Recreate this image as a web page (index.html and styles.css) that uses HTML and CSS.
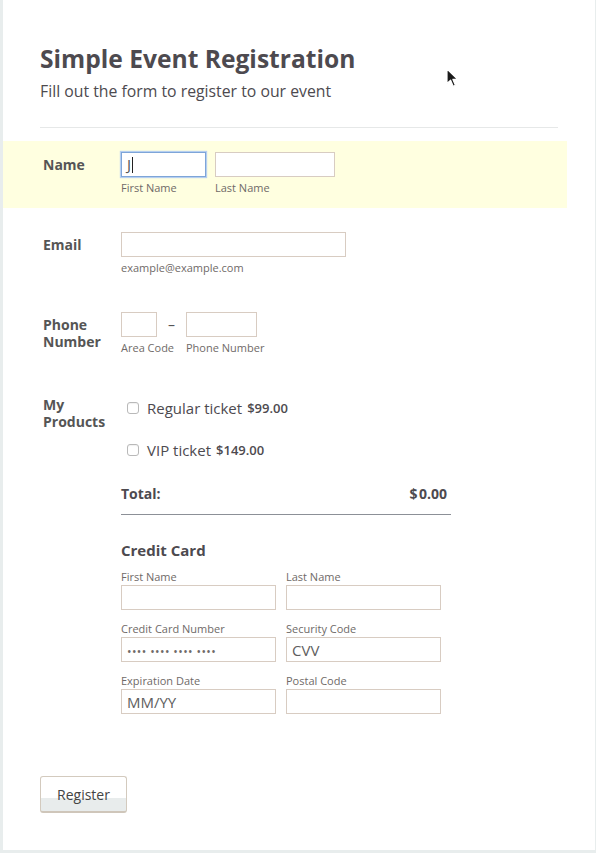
FILE: index.html
```html
<!DOCTYPE html>
<html lang="en">
<head>
<meta charset="utf-8">
<title>Simple Event Registration</title>
<link rel="stylesheet" href="styles.css">
</head>
<body>
<div class="card">
  <header class="head">
    <h1 class="title">Simple Event Registration</h1>
    <p class="subtitle">Fill out the form to register to our event</p>
  </header>

  <ul class="form">
    <li class="row active">
      <div class="label">Name</div>
      <div class="field">
        <div class="inline">
          <div class="sub">
            <span class="input w-first focused">J<span class="caret"></span></span>
            <span class="sublabel">First Name</span>
          </div>
          <div class="sub">
            <input class="input w-last" type="text">
            <span class="sublabel">Last Name</span>
          </div>
        </div>
      </div>
    </li>

    <li class="row">
      <div class="label">Email</div>
      <div class="field">
        <div class="sub">
          <input class="input w-email" type="text">
          <span class="sublabel">example@example.com</span>
        </div>
      </div>
    </li>

    <li class="row">
      <div class="label">Phone<br>Number</div>
      <div class="field">
        <div class="inline phone">
          <div class="sub w-area">
            <input class="input w-area" type="text">
            <span class="sublabel">Area Code</span>
          </div>
          <span class="dash">–</span>
          <div class="sub w-phone">
            <input class="input w-phone" type="text">
            <span class="sublabel">Phone Number</span>
          </div>
        </div>
      </div>
    </li>

    <li class="row">
      <div class="label">My<br>Products</div>
      <div class="field">
        <div class="products">
          <label class="product"><input class="check" type="checkbox"><span class="pname">Regular ticket</span><span class="price">$99.00</span></label>
          <label class="product"><input class="check" type="checkbox"><span class="pname">VIP ticket</span><span class="price">$149.00</span></label>
        </div>
        <div class="total">
          <span class="total-label">Total:</span>
          <span class="total-value">$&#8202;0.00</span>
        </div>
        <h2 class="cc-title">Credit Card</h2>
        <div class="cc-grid">
          <div class="cc-cell">
            <span class="cc-label">First Name</span>
            <input class="input cc-input" type="text">
          </div>
          <div class="cc-cell">
            <span class="cc-label">Last Name</span>
            <input class="input cc-input" type="text">
          </div>
          <div class="cc-cell">
            <span class="cc-label">Credit Card Number</span>
            <input class="input cc-input dots" type="text" placeholder="•••• •••• •••• ••••">
          </div>
          <div class="cc-cell">
            <span class="cc-label">Security Code</span>
            <input class="input cc-input" type="text" placeholder="CVV">
          </div>
          <div class="cc-cell">
            <span class="cc-label">Expiration Date</span>
            <input class="input cc-input" type="text" placeholder="MM/YY">
          </div>
          <div class="cc-cell">
            <span class="cc-label">Postal Code</span>
            <input class="input cc-input" type="text">
          </div>
        </div>
      </div>
    </li>
  </ul>

  <div class="actions">
    <button class="btn" type="button">Register</button>
  </div>

  <svg class="pointer" width="14" height="20" viewBox="0 0 14 20" aria-hidden="true">
    <path d="M1 1 L1 15.5 L4.6 12.2 L7.2 18.2 L9.4 17.2 L6.9 11.4 L11.6 11.4 Z" fill="#1a1a1a" stroke="#ffffff" stroke-width="1.2" stroke-linejoin="round"/>
  </svg>
</div>
</body>
</html>
```

FILE: styles.css
```css
* { box-sizing: border-box; }

html, body {
  margin: 0;
  padding: 0;
}

body {
  background: #e8eded;
  font-family: "Open Sans", "DejaVu Sans", sans-serif;
  color: #555;
}

.card {
  position: relative;
  background: #fff;
  margin: 0 1px 0 3px;
  height: 850px;
}

.head {
  margin: 0 37px;
  padding-top: 43px;
  padding-bottom: 26px;
  border-bottom: 1px solid #e6e8e8;
}

.title {
  margin: 0;
  font-size: 24.6px;
  line-height: 31px;
  font-weight: 700;
  color: #4d4a4f;
}

.subtitle {
  margin: 7px 0 0;
  font-size: 15.8px;
  line-height: 20px;
  color: #4d4a4f;
}

.form {
  list-style: none;
  margin: 13px 28px 0 0;
  padding: 0;
}

.row {
  display: flex;
  padding: 11px 0 14px 40px;
  margin-bottom: 13px;
}

.row.active {
  background: #ffffe0;
}

.label {
  width: 78px;
  flex: none;
  padding-top: 4px;
  font-size: 14px;
  line-height: 17px;
  font-weight: 700;
  color: #555;
}

.field {
  flex: 1;
}

.inline {
  display: flex;
  gap: 9px;
}

.sub {
  display: flex;
  flex-direction: column;
}

.input {
  display: block;
  height: 25px;
  margin: 0;
  padding: 0 5px;
  border: 1px solid #d8ccc2;
  background: #fff;
  font-family: "Open Sans", "DejaVu Sans", sans-serif;
  font-size: 15px;
  color: #555;
  outline: none;
  border-radius: 0;
}

.input::placeholder {
  color: #5e5e5e;
  opacity: 1;
}

.focused {
  display: flex;
  align-items: center;
  border-color: #7ea5d8;
  box-shadow: 0 0 1px 1px #b6cff0;
  line-height: 23px;
}

.caret {
  display: inline-block;
  width: 1px;
  height: 16px;
  margin-left: 1px;
  background: #222;
}

.w-first { width: 85px; }
.w-last { width: 120px; }
.w-email { width: 225px; }
.w-area { width: 36px; }
.w-phone { width: 71px; }

.sublabel {
  margin-top: 4px;
  font-size: 11px;
  line-height: 13px;
  color: #6f6a68;
  white-space: nowrap;
}

.inline.phone {
  gap: 0;
}

.dash {
  width: 29px;
  text-align: center;
  font-size: 14px;
  line-height: 25px;
  color: #555;
}

.products {
  display: flex;
  flex-direction: column;
  gap: 10px;
}

.product {
  display: flex;
  align-items: center;
  height: 32px;
  padding-left: 6px;
}

.check {
  appearance: none;
  -webkit-appearance: none;
  width: 12px;
  height: 12px;
  margin: 0 8px 0 0;
  border: 1px solid #b9b9b9;
  border-radius: 3px;
  background: #fff;
  box-shadow: inset 0 1px 1px rgba(0, 0, 0, 0.06);
}

.pname {
  font-size: 15px;
  color: #4d4a4f;
}

.price {
  margin-left: 5px;
  font-size: 13px;
  font-weight: 600;
  color: #4d4a4f;
}

.total {
  display: flex;
  justify-content: space-between;
  width: 330px;
  margin-top: 14px;
  padding: 4px 4px 10px 0;
  border-bottom: 1px solid #8c9097;
  font-size: 14px;
  line-height: 20px;
  font-weight: 700;
  color: #4d4a4f;
}

.cc-title {
  margin: 25px 0 0;
  font-size: 15px;
  line-height: 20px;
  font-weight: 700;
  color: #4d4a4f;
}

.cc-grid {
  display: grid;
  grid-template-columns: 155px 155px;
  column-gap: 10px;
  row-gap: 12px;
  margin-top: 10px;
}

.cc-cell {
  display: flex;
  flex-direction: column;
}

.cc-label {
  font-size: 11px;
  line-height: 13px;
  color: #6f6a68;
  margin-bottom: 2px;
}

.cc-input {
  width: 155px;
  height: 25px;
}

.dots::placeholder {
  font-size: 12px;
  letter-spacing: 0.4px;
  color: #6f6a68;
}

.actions {
  padding: 35px 0 0 37px;
}

.btn {
  width: 87px;
  height: 37px;
  padding: 0;
  border: 1px solid #d3cabe;
  border-bottom: 2px solid #cfc6ba;
  border-radius: 3px;
  background: linear-gradient(#ffffff 0%, #ffffff 62%, #e8ecec 62%, #e8ecec 100%);
  font-family: "Open Sans", "DejaVu Sans", sans-serif;
  font-size: 14px;
  color: #444;
  cursor: pointer;
}

.pointer {
  position: absolute;
  left: 443px;
  top: 68px;
}
```
